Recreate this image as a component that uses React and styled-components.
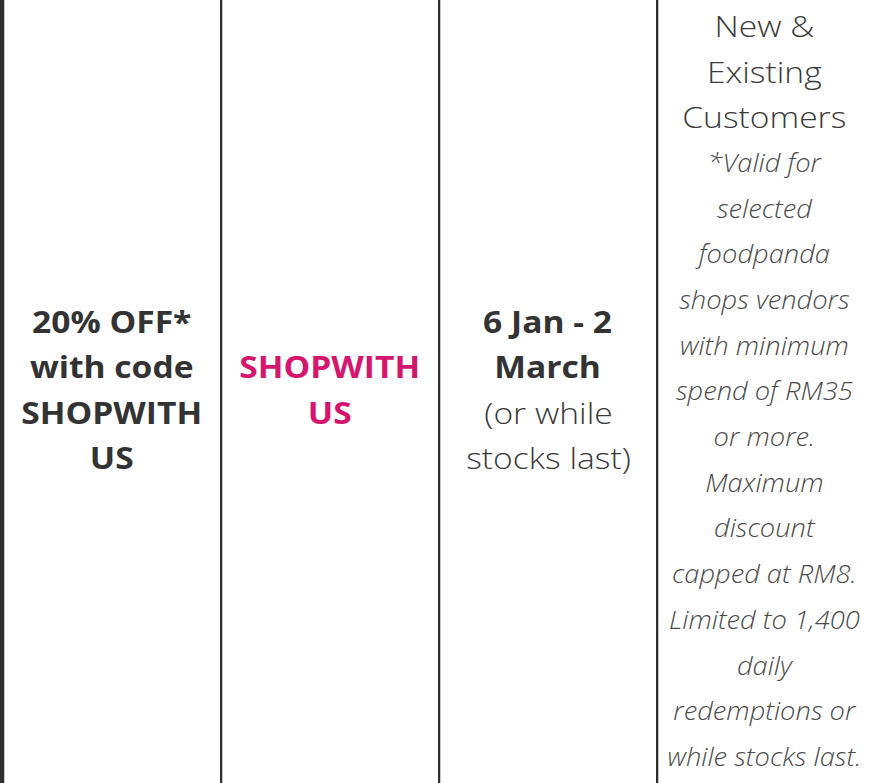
import React from 'react'
import styled, { createGlobalStyle } from 'styled-components'

const GlobalStyle = createGlobalStyle`
  html, body {
    margin: 0;
    padding: 0;
    background: #fff;
    overflow: hidden;
  }
`

function PromoTable() {
  return (
    <StyledTable>
      <StyledCell $first $lift>
        <Strong>
          20% OFF*
          <br />
          with code
          <br />
          SHOPWITH
          <br />
          US
        </Strong>
      </StyledCell>
      <StyledCell $lift>
        <Strong $pink>
          SHOPWITH
          <br />
          US
        </Strong>
      </StyledCell>
      <StyledCell $lift>
        <Strong>
          6 Jan - 2
          <br />
          March
        </Strong>
        <Light>
          (or while
          <br />
          stocks last)
        </Light>
      </StyledCell>
      <StyledCell>
        <Light>
          New &amp;
          <br />
          Existing
          <br />
          Customers
        </Light>
        <Note>
          *Valid for
          <br />
          selected
          <br />
          foodpanda
          <br />
          shops vendors
          <br />
          with minimum
          <br />
          spend of RM35
          <br />
          or more.
          <br />
          Maximum
          <br />
          discount
          <br />
          capped at RM8.
          <br />
          Limited to 1,400
          <br />
          daily
          <br />
          redemptions or
          <br />
          while stocks last.
        </Note>
      </StyledCell>
    </StyledTable>
  )
}

export default function App() {
  return (
    <>
      <GlobalStyle />
      <PromoTable />
    </>
  )
}

const StyledTable = styled.div`
  display: grid;
  grid-template-columns: 220px 218px 218px 214px;
  height: 783px;
  font-family: 'Open Sans', 'Liberation Sans', sans-serif;
  background: #fff;
`

const StyledCell = styled.div`
  display: flex;
  flex-direction: column;
  justify-content: center;
  align-items: center;
  text-align: center;
  border-left: ${(p) => (p.$first ? '4px' : '2px')} solid #2e2e2e;
  box-shadow: inset 1px 0 0 #c8c8c8;
  padding: 3px 0 ${(p) => (p.$lift ? '7px' : '3px')};
  overflow: hidden;
`

const Strong = styled.div`
  font-size: 30px;
  line-height: 45.5px;
  font-weight: 700;
  color: ${(p) => (p.$pink ? '#d5166e' : '#333')};
  transform: scaleX(1.12);
`

const Light = styled.div`
  font-size: 30px;
  line-height: 45.5px;
  font-weight: 300;
  color: #3a3a3a;
  transform: scaleX(1.12);
`

const Note = styled.div`
  font-size: 26px;
  line-height: 45.7px;
  font-weight: 300;
  font-style: italic;
  color: #4a4a4a;
  white-space: nowrap;
  transform: scaleX(1.05);
`
